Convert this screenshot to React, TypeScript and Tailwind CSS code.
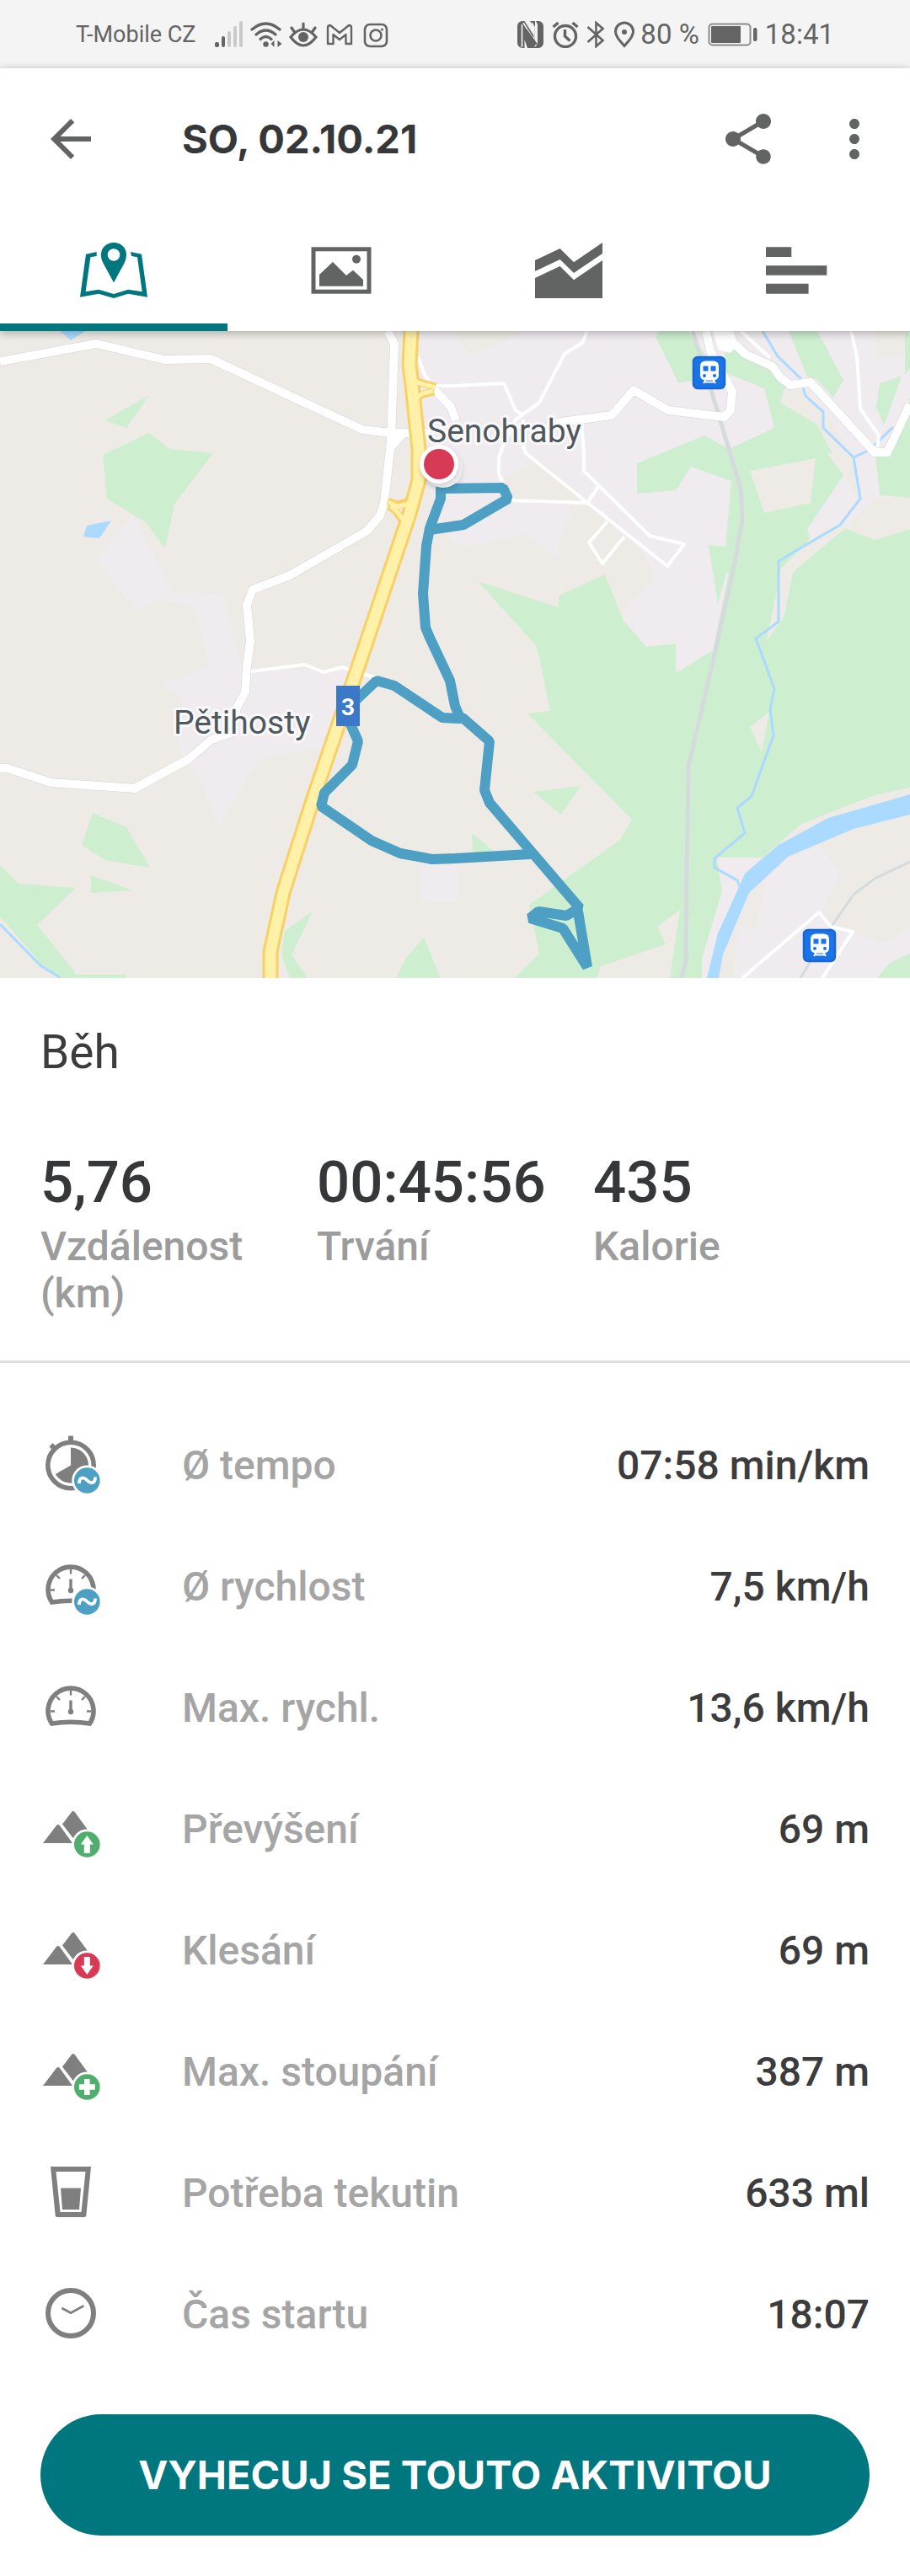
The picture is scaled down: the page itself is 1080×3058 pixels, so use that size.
import { ReactNode } from "react";
import { MdArrowBack, MdMoreVert, MdShare } from "react-icons/md";

const stats = [
  { value: "5,76", label: "Vzdálenost (km)" },
  { value: "00:45:56", label: "Trvání" },
  { value: "435", label: "Kalorie" },
];

function StatusBar() {
  return (
    <div className="flex h-[81px] items-center justify-between bg-[#f4f4f4] pr-[90px] pl-[90px] text-[#636463]">
      <div className="flex items-center">
        <span className="text-[27px] leading-8">T-Mobile CZ</span>
        <svg width="34" height="32" viewBox="0 0 34 32" className="ml-[22px]">
          <g fill="#636463">
            <rect x="0" y="25" width="5" height="6" rx="2" />
            <rect x="8" y="18" width="4" height="13" rx="2" />
          </g>
          <g fill="#c9c9c9">
            <rect x="15" y="12" width="4" height="19" rx="2" />
            <rect x="22" y="6" width="4" height="25" rx="2" />
            <rect x="29" y="0" width="4" height="31" rx="2" />
          </g>
        </svg>
        <svg width="38" height="32" viewBox="0 0 38 32" className="ml-2" fill="none" stroke="#636463" strokeWidth="3.2" strokeLinecap="round">
          <path d="M2 10Q18.500 -4 35 10M7 16Q18.500 6 30 16M12 21.500Q18.500 15.500 25 21.500" />
          <circle cx="18.500" cy="27.500" r="3.200" fill="#636463" stroke="none" />
          <path d="M28.500 23v8l-4-4zM32.500 23v8l5-4z" fill="#636463" stroke="none" />
        </svg>
        <svg width="34" height="32" viewBox="0 0 34 32" className="ml-2" fill="none" stroke="#636463" strokeWidth="3.2" strokeLinecap="round">
          <path d="M2 19Q17 1 32 19Q17 39 2 19zM17 3v7M3 8l3.500 5M31 8l-3.500 5" />
          <circle cx="17" cy="19" r="6" fill="#636463" stroke="none" />
        </svg>
        <svg width="32" height="32" viewBox="0 0 32 32" className="ml-[10px]" fill="none" stroke="#636463" strokeWidth="2.4" strokeLinejoin="round">
          <path d="M2 27V8q0-3 3-3l11 9 11-9q3 0 3 3v19h-6.500V16L16 22l-7.500-6v11z" />
        </svg>
        <svg width="30" height="32" viewBox="0 0 30 32" className="ml-3" fill="none" stroke="#636463" strokeWidth="2.6">
          <rect x="2" y="4" width="26" height="26" rx="6" />
          <circle cx="15" cy="17" r="6.500" />
          <circle cx="22.500" cy="10" r="1.600" fill="#636463" stroke="none" />
        </svg>
      </div>

      <div className="flex items-center">
        <svg width="32" height="32" viewBox="0 0 32 32">
          <path d="M7 0h2.500L21 18V8L16 0h6v26l-1 6h-8L9.500 22v10H7a6 6 0 0 1-6-6V6a6 6 0 0 1 6-6z" fill="#636463" />
          <path d="M6.500 31V4M8 2l13 21M21 22V7l-3-5" fill="none" stroke="#f4f4f4" strokeWidth="1.6" />
          <path d="M23 0h3a6 6 0 0 1 6 6v20a6 6 0 0 1-6 6H15l8-2 2-4V4z" fill="#636463" />
          <path d="M10 10l13 18" stroke="#636463" strokeWidth="4" />
        </svg>
        <svg width="32" height="32" viewBox="0 0 32 32" className="ml-[10px]" fill="none" stroke="#636463" strokeWidth="3.4">
          <circle cx="16" cy="18" r="12.500" />
          <path d="M15.500 10v8l6 5.500M1.500 7l6-5M30.500 7l-6-5" />
        </svg>
        <svg width="22" height="32" viewBox="0 0 22 32" className="ml-[9px]" fill="none" stroke="#636463" strokeWidth="2.6">
          <path d="M1.500 7l18 16-8 7V2l8 7-18 16" />
        </svg>
        <svg width="26" height="32" viewBox="0 0 26 32" className="ml-[10px]" fill="none" stroke="#636463" strokeWidth="3">
          <path d="M13 29.500C9 25 2.500 19 2.500 12.500a10.500 10.500 0 0 1 21 0C23.500 19 17 25 13 29.500z" />
          <circle cx="13" cy="13" r="3" fill="#636463" stroke="none" />
        </svg>
        <span className="ml-1.5 text-[33px] leading-8">80 %</span>
        <svg width="60" height="28" viewBox="0 0 60 28" className="ml-[10px]">
          <rect x="1.500" y="1.500" width="49" height="25" rx="4" fill="none" stroke="#8a8b8a" strokeWidth="2" />
          <rect x="4" y="4" width="35" height="20" rx="1" fill="#636463" />
          <rect x="54" y="6" width="4.500" height="16" rx="2" fill="#636463" />
        </svg>
        <span className="ml-2 text-[33px] leading-8">18:41</span>
      </div>
    </div>
  );
}

function MapTabIcon() {
  return (
    <svg width="80" height="66" viewBox="0 0 80 66" fill="#00767f">
      <path d="M19.700 11 7 13.700 0 64.700l22-4L40 66l17-5.300 23 4L73 13.700 60 11l1 5 7 1.300 5.700 41L57 55.700 40 61l-18-5.300-15.400 2.600 5.800-41L19.700 16z" />
      <path fillRule="evenodd" d="M40 47.500 27 23.500C21 10 29 0 40 0s19 10 13 23.500zM40 7.200a7.300 7.300 0 1 0 0 14.600 7.300 7.300 0 0 0 0-14.600z" />
    </svg>
  );
}

function PhotoTabIcon() {
  return (
    <svg width="80" height="66" viewBox="0 0 80 66" fill="#626463">
      <rect x="7" y="7.800" width="66" height="50.400" fill="none" stroke="#626463" strokeWidth="5" />
      <path d="M14 51.700V38L30 23l16 16 8-6.300L66 44v7.700z" />
      <circle cx="58" cy="19.700" r="5" />
    </svg>
  );
}

function ChartTabIcon() {
  return (
    <svg width="80" height="66" viewBox="0 0 80 66" fill="#626463">
      <path d="M0 21 29.600 7 46 23.300 80 0v13L46 36 29.600 20 0 34z" />
      <path d="M0 42 29.600 28 46 44.300 80 21v45H0z" />
    </svg>
  );
}

function SplitsTabIcon() {
  return (
    <svg width="80" height="66" viewBox="0 0 80 66" fill="#626463">
      <path d="M4 5.300h30.300V17H4zM4 27.200h72.300v11.600H4zM4 48.700h50.600v12H4z" />
    </svg>
  );
}

const tabs = [
  { name: "Mapa", icon: <MapTabIcon /> },
  { name: "Fotky", icon: <PhotoTabIcon /> },
  { name: "Grafy", icon: <ChartTabIcon /> },
  { name: "Úseky", icon: <SplitsTabIcon /> },
];

function Header() {
  return (
    <header className="relative z-10 bg-white shadow-[0_2px_10px_rgba(0,0,0,0.3)]">
      <div className="flex h-[168px] items-center pr-[30px] pl-12 text-[#626463]">
        <button aria-label="Zpět">
          <MdArrowBack size={72} />
        </button>
        <h1 className="ml-24 flex-1 font-['Inter'] text-[47px] leading-[60px] font-bold text-[#363738]">
          SO, 02.10.21
        </h1>
        <button aria-label="Sdílet">
          <MdShare size={72} />
        </button>
        <button aria-label="Další možnosti" className="ml-[54px]">
          <MdMoreVert size={72} />
        </button>
      </div>

      <div role="tablist" className="grid grid-cols-4">
        {tabs.map((tab, i) => (
          <button
            key={tab.name}
            role="tab"
            aria-label={tab.name}
            aria-selected={i === 0}
            className={
              i === 0
                ? "flex h-36 items-center justify-center border-b-9 border-[#00767f] pt-[9px]"
                : "flex h-36 items-center justify-center"
            }
          >
            {tab.icon}
          </button>
        ))}
      </div>
    </header>
  );
}

function TransitStop({ x, y }: { x: number; y: number }) {
  return (
    <g transform={`translate(${x} ${y})`}>
      <rect x="1" y="1" width="37" height="37" rx="5" fill="#1a73e8" stroke="#1967d2" strokeWidth="2.500" />
      <rect x="9" y="5.500" width="22" height="23" rx="6" fill="#fff" />
      <path d="M16 27l-3 5M24 27l3 5M14 30.500h12" stroke="#fff" strokeWidth="2" />
      <path d="M12.500 11.500h6v6h-6zM21.500 11.500h6v6h-6z" fill="#1a73e8" />
      <circle cx="14" cy="23" r="2" fill="#1a73e8" />
      <circle cx="26" cy="23" r="2" fill="#1a73e8" />
    </g>
  );
}

const mainRoads =
  "M0 36 114 15 195 34 250 33 430 117 463 121 510 121M460 0 468 15 464 130 456 204 451 219 436 237 344 290 300 307 293 325 297 369 293 397 291 429 281 447 275 477 251 485 224 508 160 543 60 536 9 519H0M478 122 464 138M515 69 535 90 541 106M660 109 688 105 726 100 752 70 793 94 860 102 867 94 869 72 843 24 838 0M857 17H874L884 27 917 42 926 55 938 64 962 61 1038 144H1053L1080 87";

const highway =
  "M488 -4V0L486 40 489 64 497 140V177L486 217 429 387 372 554 336 667 321 737V772";

function RouteMap() {
  return (
    <svg
      className="block h-[768px] w-full bg-[#eeebe6]"
      viewBox="0 0 1080 768"
      preserveAspectRatio="xMidYMid slice"
      role="img"
      aria-label="Mapa trasy"
    >
      {/* built-up areas */}
      <g fill="#efebef">
        <path d="M498 0H1080V220L845 380 802 406 767 375 743 345 740 334 778 290 762 262 697 205H678L659 270 626 240 555 256 535 249 506 180z" />
        <path d="M157 220 205 310 265 313 286 397 293 404 413 400 396 490 306 509 259 589 241 539 210 494 217 437 191 420 248 399 244 380 231 327 189 319 162 332 112 270z" />
        <path d="M499 634h43v43h-43z" />
      </g>
      <g fill="#eeebe6">
        <path d="M595 174 643 155 695 202H609zM540 0H624L557 29z" />
        <path d="M1039 0H1074V29L1041 32z" />
      </g>

      {/* woods */}
      <g fill="#cdeecf">
        <path d="M567 297 663 328V314L718 289 740 344 767 375 802 371V406L846 379 865 287H862L852 324 841 254 861 256 868 178 820 161 802 189 756 193V157L836 124 865 140 919 115 907 68 860 49V22L876 22 915 40 936 63 931 69 926 85 969 110 988 145H982L1001 171 958 235 961 247 927 282 922 317 910 367 930 340 941 286 1003 234 1038 248 1080 235V542L1038 551 951 585 905 625H851L857 665 833 745V768H795L807 687 780 707 790 728 713 754 708 768H611L640 739 628 681 736 604 750 580 626 454 653 451 640 387 636 373z" />
        <path d="M778 7 783 0H817L845 40 822 59 805 61zM936 0H970L1001 58 989 79 969 57 958 54zM1044 62 1070 54 1049 112 1040 90zM1074 0H1080V45L1074 52z" />
        <path d="M1056 149 1080 80V198L1044 195 1039 147z" />
        <path d="M125 106 177 76 150 115zM122 147 177 121 201 140 253 145 207 205 196 258 173 227 127 199z" />
        <path d="M110 572 150 589 178 637 125 628 97 610zM108 646 157 664 108 667zM0 634 22 656 90 661 44 705 91 764H149V768H73L48 750 0 695z" />
        <path d="M371 689 346 740 365 768H344L334 740 338 712zM503 720 523 768H470L482 744z" />
        <path d="M633 547 689 540 666 574zM560 596 586 617 561 619z" />
      </g>

      {/* open fields */}
      <g fill="#eeebe6">
        <path d="M890 166 968 151 962 204 907 216zM890 470 913 452 904 500z" />
        <path d="M931 69 955 72 985 105 1013 150 1018 200 1003 172 982 145H988L969 110 926 85z" />
        <path d="M1003 234 1038 200 1080 198V235L1038 248zM961 247 1003 225V234L941 286 930 340 910 367 927 282z" />
      </g>
      <path d="M972 612 998 644 974 689 988 705 1051 727 1080 707V768H870L877 704 898 710 908 654 936 625zM851 625H905L884 644 877 664 845 768H833V745L857 665z" fill="#efebef" />
      <path d="M1080 739 1056 750 1041 768H1080z" fill="#cdeecf" />

      {/* water */}
      <g fill="#aadaff">
        <path d="M1080 550 983 578 924 610 884 644 877 660 852 715 839 768H853L858 740 889 667 935 624 1013 591 1080 574z" />
        <path d="M103 231 132 225 118 246 99 244zM71 0H101L84 11z" />
      </g>
      <path
        d="M905 0 923 30 950 56 956 77 977 96V115L1013 150 1021 199 997 230 924 273V345L897 365 909 397 919 425 914 449 918 480 892 552 875 566 884 596 848 626V637L875 652 878 660M1013 150 1032 141 1060 114M0 704 48 753 72 768"
        fill="none"
        stroke="#aadaff"
        strokeWidth="3"
      />

      {/* railway */}
      <g fill="none" stroke="#d5dadc">
        <path d="M822 0 843 67 862 130 879 187 881 224 871 280 845 397 817 517 815 647 814 747 809 768" strokeWidth="5" />
        <path d="M1080 630 1038 650 1013 669 988 705 950 768" strokeWidth="3" />
      </g>

      {/* roads */}
      <g fill="none" strokeLinejoin="round">
        <path
          d="M513 65H540L598 62 612 94 621 100M697 0 691 14 670 27 640 85 612 105 597 137 592 150V170L597 180 609 201 697 204M621 105V137L624 145 695 202 792 279 812 253 771 243 693 166V145L690 105M710 185 697 204M721 226 699 251 715 276 741 244M879 0 914 32M1010 0 1017 30 1021 92 1043 124 1041 140M496 30 503 50 513 65M298 404 362 396 384 405 406 399 444 411M881 768 972 690 986 707 1012 713 976 768"
          stroke="#fff"
          strokeWidth="4"
        />
        <path d={mainRoads} stroke="#cfd2da" strokeWidth="11" />
        <path d={mainRoads} stroke="#fff" strokeWidth="10" />
        <path d="M846 0H870L876 18 866 26 853 22z" fill="#fff" />
        <path d="M488 56 498 61 517 66M492 80 502 75 515 72M460 202 471 206 484 203M462 208 470 214 478 226" stroke="#f8d067" strokeWidth="9" />
        <path d={highway} stroke="#f8d067" strokeWidth="19" />
        <path d="M488 56 498 62 517 67M492 80 502 74 514 71M461 203 471 208 486 205M464 208 470 213 480 226" stroke="#fff1a8" strokeWidth="5" />
        <path d={highway} stroke="#fff1a8" strokeWidth="13" />
      </g>

      {/* recorded track */}
      <path
        d="M523 187V199L510 234 506 255 502 312 505 352 510 364 534 415 540 445 546 459 549 459 581 487 575 545 581 560 688 685 672 694 639 689 629 697 668 709 697 755 686 689M629 621 540 626 513 627 475 620 441 605 381 564 385 548 418 515 425 487 413 460V447L447 415 468 421 525 459 545 460M523 187 597 186 603 199 550 230 510 236"
        fill="none"
        stroke="#4d9fc4"
        strokeWidth="12"
        strokeLinejoin="bevel"
        strokeLinecap="round"
      />

      <TransitStop x={822} y={30} />
      <TransitStop x={953} y={710} />

      <rect x="399" y="421" width="28" height="48" fill="#3b78c8" />
      <text x="413" y="456" textAnchor="middle" fontSize="28" fontWeight="700" fill="#fff">
        3
      </text>
      <g fontSize="39" fill="#4f575f" stroke="#faf9fa" strokeWidth="6" strokeLinejoin="round" paintOrder="stroke">
        <text x="507" y="132">Senohraby</text>
        <text x="206" y="478">Pětihosty</text>
      </g>

      <g className="drop-shadow-md">
        <circle cx="526" cy="163" r="23" fill="#eee" />
      </g>
      <g className="drop-shadow-md">
        <circle cx="521" cy="158" r="23" fill="#fff" />
      </g>
      <circle cx="521" cy="158" r="18" fill="#d63a54" />
    </svg>
  );
}

function Icon({ children }: { children: ReactNode }) {
  return (
    <svg width="72" height="72" viewBox="0 0 72 72" fill="#7f7f7f" className="shrink-0">
      {children}
    </svg>
  );
}

function Badge({ color, d }: { color: string; d: string }) {
  return (
    <>
      <circle cx="55.300" cy="53.500" r="18" fill="#fff" />
      <circle cx="55.300" cy="53.500" r="15.300" fill={color} />
      <path d={d} fill="#fff" />
    </>
  );
}

function AverageBadge() {
  return (
    <>
      <Badge color="#4d9fc4" d="" />
      <path d="M46 57C46 49 51 49 55.500 53.500S65 57 65 49.500" fill="none" stroke="#fff" strokeWidth="3.800" />
    </>
  );
}

function Stopwatch() {
  return (
    <>
      <path d="M33 0.500h6v7h-6zM10.500 13.500l4-4.500 5 5-4 4.500z" />
      <circle cx="36" cy="35.500" r="27.200" fill="none" stroke="#7f7f7f" strokeWidth="5.600" />
      <path d="M36 35.500V14.500A21 21 0 1 1 17.800 46z" />
    </>
  );
}

function Gauge() {
  return (
    <>
      <path d="M13.500 54A27 27 0 1 1 58.500 54Q36 50.500 13.500 54z" fill="none" stroke="#7f7f7f" strokeWidth="5.600" />
      <path d="M12 39.500h5M60 39.500h-5M36 15v5.500M19 22l4 4M53 22l-4 4" stroke="#7f7f7f" strokeWidth="2.400" />
      <path d="M34.300 26.500h3.400V40h-3.400z" />
      <circle cx="36" cy="40" r="3.200" />
    </>
  );
}

function Mountains() {
  return (
    <path d="M26 29.500 37 15q1.800-2 3.600 0L56 36 39.500 47zM3 52 19 31q1.800-2 3.800 0L38 52z" />
  );
}

const arrowUp = "M55.300 43l7.500 10.500h-4v10.500h-7V53.500h-4z";
const arrowDown = "M55.300 64l7.500-10.500h-4V43h-7v10.500h-4z";
const plus = "M52 44h6.600v6.200h6.100v6.600h-6.100V63H52v-6.200h-6.100v-6.600H52z";

const details = [
  { label: "Ø tempo", value: "07:58 min/km", icon: <><Stopwatch /><AverageBadge /></> },
  { label: "Ø rychlost", value: "7,5 km/h", icon: <><Gauge /><AverageBadge /></> },
  { label: "Max. rychl.", value: "13,6 km/h", icon: <Gauge /> },
  { label: "Převýšení", value: "69 m", icon: <><Mountains /><Badge color="#50ad6d" d={arrowUp} /></> },
  { label: "Klesání", value: "69 m", icon: <><Mountains /><Badge color="#d63a54" d={arrowDown} /></> },
  { label: "Max. stoupání", value: "387 m", icon: <><Mountains /><Badge color="#50ad6d" d={plus} /></> },
  {
    label: "Potřeba tekutin",
    value: "633 ml",
    icon: (
      <>
        <path fillRule="evenodd" d="M12 4h48l-5.700 58q-.2 2-2.300 2H20q-2.100 0-2.300-2zM18.500 10l5 48h25l5-48z" />
        <path d="M24 29.500h24L46 55H26z" />
      </>
    ),
  },
  {
    label: "Čas startu",
    value: "18:07",
    icon: (
      <g fill="none" stroke="#7f7f7f">
        <circle cx="36" cy="34" r="27" strokeWidth="6" />
        <path d="M25.500 28 36 33.700 51.300 25.300" strokeWidth="2.800" />
      </g>
    ),
  },
];

export default function App() {
  return (
    <div className="min-h-screen w-full bg-white font-['Roboto',sans-serif]">
      <StatusBar />
      <Header />
      <RouteMap />

      <section className="border-b-3 border-[#e0e0e0] px-12 pt-14 pb-[51px]">
        <h2 className="text-[55px] leading-16 text-[#3c3c3c]">Běh</h2>
        <dl className="mt-20 grid grid-cols-3">
          {stats.map((stat) => (
            <div key={stat.label} className="flex flex-col-reverse justify-end gap-[5px]">
              <dt className="text-[48px] leading-14 font-medium text-[#9b9c9b]">{stat.label}</dt>
              <dd className="text-[69px] leading-[86px] font-medium text-[#363738]">{stat.value}</dd>
            </div>
          ))}
        </dl>
      </section>

      <dl className="px-12 pt-[50px]">
        {details.map((row) => (
          <div key={row.label} className="flex h-36 items-center text-[48px] leading-14 font-medium">
            <Icon>{row.icon}</Icon>
            <dt className="ml-24 flex-1 text-[#a5a5a5]">{row.label}</dt>
            <dd className="text-[#3c3c3c]">{row.value}</dd>
          </div>
        ))}
      </dl>

      <div className="px-12 pt-[46px] pb-12">
        <button className="h-36 w-full rounded-full bg-[#00767f] font-['Inter'] text-[47px] leading-[60px] font-bold text-white">
          VYHECUJ SE TOUTO AKTIVITOU
        </button>
      </div>
    </div>
  );
}
